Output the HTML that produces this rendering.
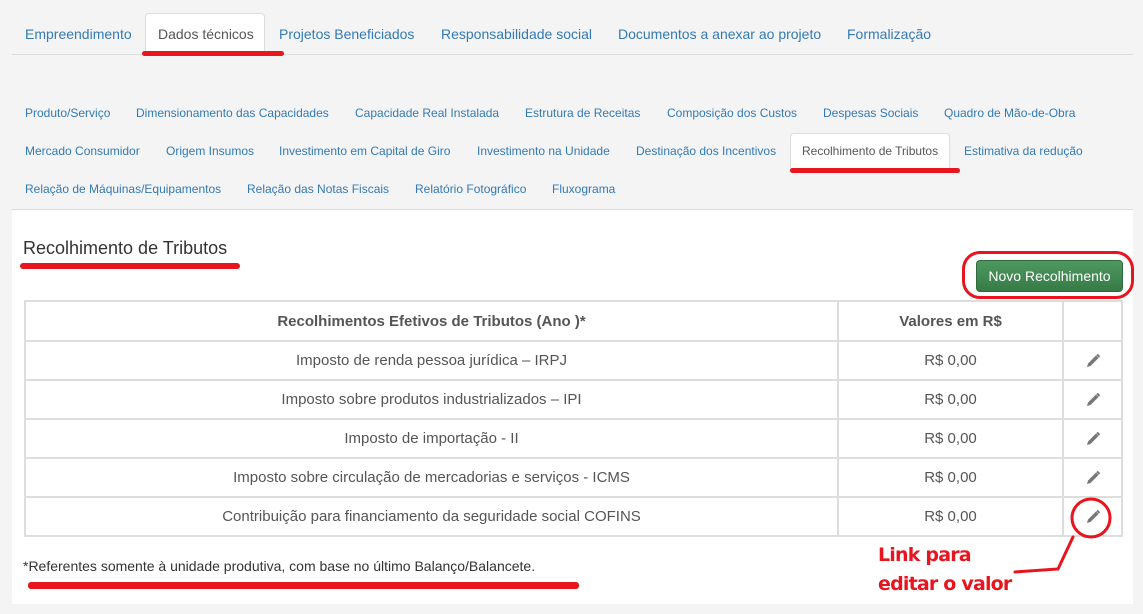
<!DOCTYPE html>
<html><head><meta charset="utf-8"><style>
*{margin:0;padding:0;box-sizing:border-box}
body{width:1143px;height:614px;background:#f4f4f4;font-family:"Liberation Sans",Arial,sans-serif;position:relative;overflow:hidden}
.a{position:absolute;white-space:nowrap}
.t{color:#337ab7;font-size:14px}
.s{color:#337ab7;font-size:12px}
.red{position:absolute;background:#e8141e;border-radius:3px}
table{position:absolute;left:24px;top:300px;width:1099px;border-collapse:collapse;font-size:15px;color:#555}
td,th{border:2px solid #ddd;text-align:center;height:39px}
th{font-weight:bold;height:40px}
td svg{display:block;margin:0 auto}
</style></head><body>
<div class="a" style="left:12px;top:54px;width:1121px;height:1px;background:#ddd"></div>
<div class="a" style="left:145px;top:13px;width:120px;height:42px;background:#fff;border:1px solid #ddd;border-bottom:none;border-radius:4px 4px 0 0"></div>
<div class="a t" style="left:25px;top:26px">Empreendimento</div>
<div class="a t" style="left:158px;top:26px;color:#555">Dados técnicos</div>
<div class="a t" style="left:279px;top:26px">Projetos Beneficiados</div>
<div class="a t" style="left:441px;top:26px">Responsabilidade social</div>
<div class="a t" style="left:618px;top:26px">Documentos a anexar ao projeto</div>
<div class="a t" style="left:847px;top:26px">Formalização</div>
<div class="red" style="left:142px;top:51px;width:142px;height:5px"></div>

<div class="a s" style="left:25px;top:106px">Produto/Serviço</div>
<div class="a s" style="left:136px;top:106px">Dimensionamento das Capacidades</div>
<div class="a s" style="left:355px;top:106px">Capacidade Real Instalada</div>
<div class="a s" style="left:525px;top:106px">Estrutura de Receitas</div>
<div class="a s" style="left:667px;top:106px">Composição dos Custos</div>
<div class="a s" style="left:823px;top:106px">Despesas Sociais</div>
<div class="a s" style="left:944px;top:106px">Quadro de Mão-de-Obra</div>
<div class="a" style="left:790px;top:133px;width:160px;height:38px;background:#fff;border:1px solid #ddd;border-bottom:none;border-radius:4px 4px 0 0"></div>
<div class="a s" style="left:25px;top:144px">Mercado Consumidor</div>
<div class="a s" style="left:166px;top:144px">Origem Insumos</div>
<div class="a s" style="left:279px;top:144px">Investimento em Capital de Giro</div>
<div class="a s" style="left:477px;top:144px">Investimento na Unidade</div>
<div class="a s" style="left:636px;top:144px">Destinação dos Incentivos</div>
<div class="a s" style="left:802px;top:144px;color:#555">Recolhimento de Tributos</div>
<div class="a s" style="left:964px;top:144px">Estimativa da redução</div>
<div class="red" style="left:790px;top:168px;width:170px;height:5px"></div>
<div class="a s" style="left:25px;top:182px">Relação de Máquinas/Equipamentos</div>
<div class="a s" style="left:247px;top:182px">Relação das Notas Fiscais</div>
<div class="a s" style="left:415px;top:182px">Relatório Fotográfico</div>
<div class="a s" style="left:552px;top:182px">Fluxograma</div>

<div class="a" style="left:12px;top:209px;width:1121px;height:395px;background:#fff;border-top:1px solid #ddd"></div>
<div class="a" style="left:23px;top:238px;font-size:18px;color:#333">Recolhimento de Tributos</div>
<div class="red" style="left:20px;top:263px;width:220px;height:6px"></div>
<div class="a" style="left:976px;top:260px;width:147px;height:32px;background:linear-gradient(#4d9960,#377a46);border:1px solid #2f6b3c;border-radius:4px;color:#fff;font-size:14px;text-align:center;line-height:30px">Novo Recolhimento</div>
<div class="a" style="left:962px;top:251px;width:172px;height:48px;border:3px solid #e8141e;border-radius:18px"></div>

<table>
<tr><th style="width:813px">Recolhimentos Efetivos de Tributos (Ano )*</th><th style="width:225px">Valores em R$</th><th></th></tr>
<tr><td>Imposto de renda pessoa jurídica – IRPJ</td><td>R$ 0,00</td><td><svg width="16" height="16" viewBox="0 0 16 16"><path d="M2 14 L3 10.5 L11 2.5 L13.5 5 L5.5 13 Z" fill="#777"/><path d="M12 1.5 L14.5 4" stroke="#777" stroke-width="2"/></svg></td></tr>
<tr><td>Imposto sobre produtos industrializados – IPI</td><td>R$ 0,00</td><td><svg width="16" height="16" viewBox="0 0 16 16"><path d="M2 14 L3 10.5 L11 2.5 L13.5 5 L5.5 13 Z" fill="#777"/><path d="M12 1.5 L14.5 4" stroke="#777" stroke-width="2"/></svg></td></tr>
<tr><td>Imposto de importação - II</td><td>R$ 0,00</td><td><svg width="16" height="16" viewBox="0 0 16 16"><path d="M2 14 L3 10.5 L11 2.5 L13.5 5 L5.5 13 Z" fill="#777"/><path d="M12 1.5 L14.5 4" stroke="#777" stroke-width="2"/></svg></td></tr>
<tr><td>Imposto sobre circulação de mercadorias e serviços - ICMS</td><td>R$ 0,00</td><td><svg width="16" height="16" viewBox="0 0 16 16"><path d="M2 14 L3 10.5 L11 2.5 L13.5 5 L5.5 13 Z" fill="#777"/><path d="M12 1.5 L14.5 4" stroke="#777" stroke-width="2"/></svg></td></tr>
<tr><td>Contribuição para financiamento da seguridade social COFINS</td><td>R$ 0,00</td><td><svg width="16" height="16" viewBox="0 0 16 16"><path d="M2 14 L3 10.5 L11 2.5 L13.5 5 L5.5 13 Z" fill="#777"/><path d="M12 1.5 L14.5 4" stroke="#777" stroke-width="2"/></svg></td></tr>
</table>
<div class="a" style="left:23px;top:558px;font-size:14px;color:#333">*Referentes somente à unidade produtiva, com base no último Balanço/Balancete.</div>
<div class="red" style="left:28px;top:582px;width:551px;height:7px"></div>
<div class="a" style="left:878px;top:544px;font-size:19px;font-weight:bold;color:#e8141e;font-family:'DejaVu Sans',sans-serif;letter-spacing:-0.8px">Link para</div>
<div class="a" style="left:878px;top:573px;font-size:19px;font-weight:bold;color:#e8141e;font-family:'DejaVu Sans',sans-serif;letter-spacing:-0.8px">editar o valor</div>
<svg class="a" style="left:0;top:0" width="1143" height="614"><circle cx="1091" cy="518" r="19" fill="none" stroke="#e8141e" stroke-width="3"/><path d="M1073 537 L1058 569 L1015 572" fill="none" stroke="#e8141e" stroke-width="3" stroke-linecap="round"/></svg>
</body></html>
